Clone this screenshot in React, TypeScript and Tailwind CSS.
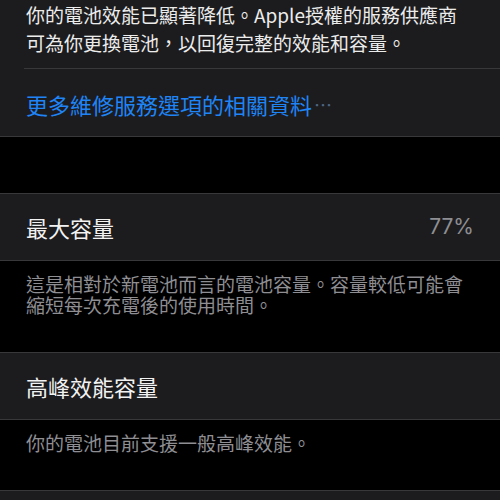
import React from 'react'

const FONT = { fontFamily: '"Noto Sans CJK TC", "Noto Sans", sans-serif' }

function Card({ children }: { children: React.ReactNode }) {
  return <div className="border-y border-[#38383a] bg-[#1c1c1e]">{children}</div>
}

function Footer({ children }: { children: React.ReactNode }) {
  return <p className="px-[26px] pt-[12px] text-[19px] leading-[21px] text-[#8e8e93]">{children}</p>
}

export default function App() {
  return (
    <div className="h-[500px] w-[500px] overflow-hidden bg-black" style={FONT}>
      <div className="border-b border-[#38383a] bg-[#1c1c1e]">
        <p className="pl-[26px] pt-[1px] text-[19px] leading-[28px] text-[#ececec]">
          你的電池效能已顯著降低。Apple授權的服務供應商
          <br />
          可為你更換電池，以回復完整的效能和容量。
        </p>
        <div className="ml-[24px] mt-[11px] border-t border-[#38383a]" />
        <div className="flex h-[67px] items-center pl-[26px] pt-[3px] text-[22px] text-[#1f84f5]">
          更多維修服務選項的相關資料
          <span className="ml-[2px] text-[18px] text-[#4d6685]">⋯</span>
        </div>
      </div>

      <div className="h-[56px]" />

      <Card>
        <div className="flex h-[66px] items-center justify-between px-[26px]">
          <span className="text-[22px] text-[#f2f2f2]">最大容量</span>
          <span className="text-[21px] text-[#8e8e93]" style={{ fontFamily: '"Inter", "Noto Sans", sans-serif' }}>
            77%
          </span>
        </div>
      </Card>
      <Footer>
        這是相對於新電池而言的電池容量。容量較低可能會
        <br />
        縮短每次充電後的使用時間。
      </Footer>

      <div className="h-[37px]" />

      <Card>
        <div className="flex h-[66px] items-center px-[26px]">
          <span className="text-[22px] text-[#f2f2f2]">高峰效能容量</span>
        </div>
      </Card>
      <Footer>你的電池目前支援一般高峰效能。</Footer>

      <div className="h-[37px]" />
      <Card>
        <div className="h-[60px]" />
      </Card>
    </div>
  )
}
